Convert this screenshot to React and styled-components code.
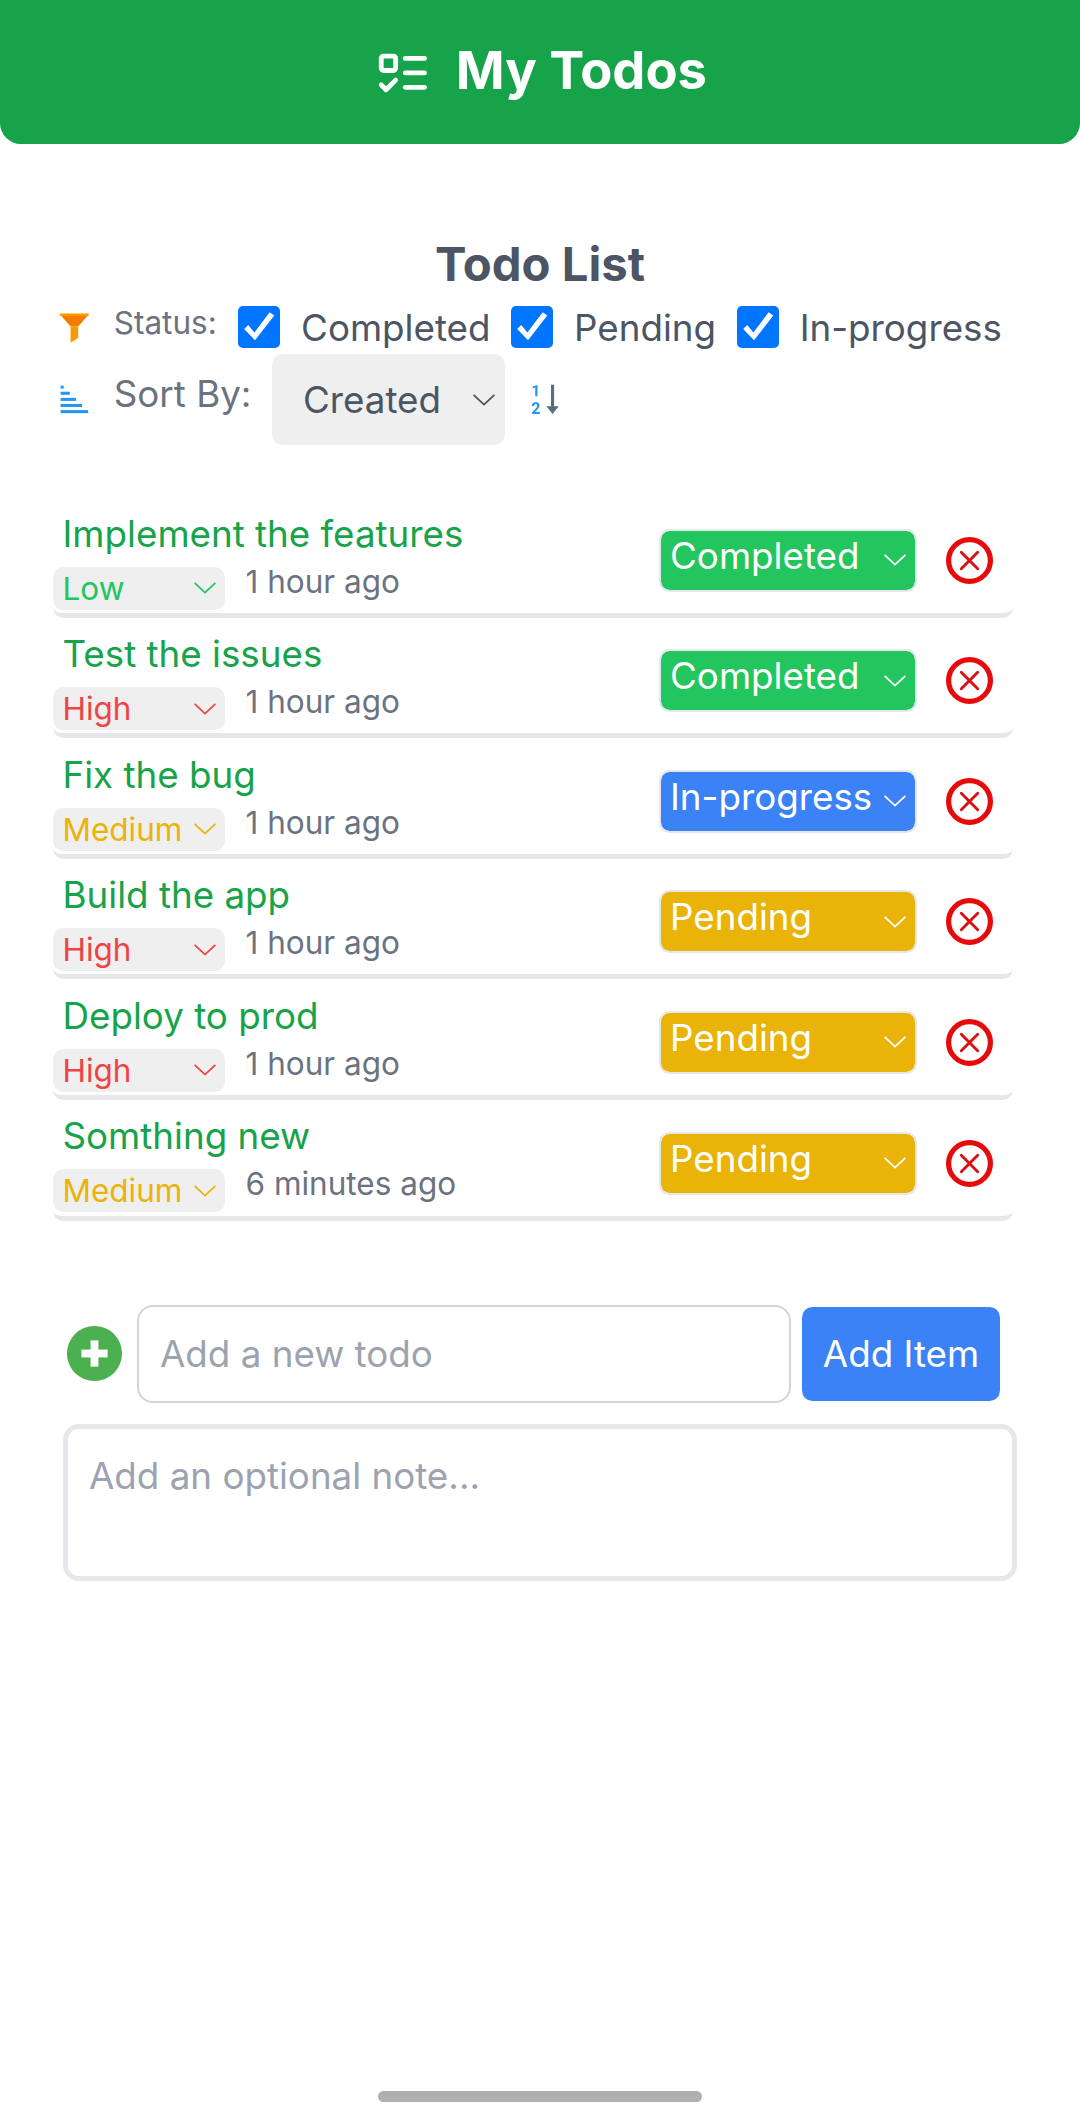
import React from "react";
import styled, { createGlobalStyle } from "styled-components";
import { LuListTodo } from "react-icons/lu";
import {
  FcFilledFilter,
  FcGenericSortingAsc,
  FcNumericalSorting12,
  FcPlus,
} from "react-icons/fc";

const GlobalStyle = createGlobalStyle`
  *, *::before, *::after { box-sizing: border-box; }
  body {
    margin: 0;
    background: #fff;
    color: #4b5563;
    font-family: Inter, "Liberation Sans", sans-serif;
    font-size: 36.75px;
    line-height: 52px;
  }
  ul { list-style: none; margin: 0; padding: 0; }
  h1, h2, p { margin: 0; }
  svg { display: block; flex: none; }
`;

const Page = styled.div`
  display: flex;
  flex-direction: column;
  height: 2116px;
  overflow: hidden;
`;

const Header = styled.header`
  display: flex;
  justify-content: center;
  gap: 24px;
  height: 144px;
  padding: 34px 0 0 1px;
  background: #16a34a;
  color: #fff;
  border-radius: 0 0 21px 21px;

  svg { margin-top: 10px; }
`;

const AppTitle = styled.h1`
  font-size: 52.5px;
  line-height: 72px;
  font-weight: 700;
`;

const Main = styled.main`
  display: flex;
  flex-direction: column;
  padding: 92px 63px 0 53px;
`;

const ListTitle = styled.h2`
  padding-left: 10px;
  text-align: center;
  font-size: 47.25px;
  line-height: 56px;
  font-weight: 700;
`;

const FilterBar = styled.div`
  display: flex;
  align-items: center;
  height: ${(p) => p.$height}px;
  margin-top: ${(p) => p.$top || 0}px;
  padding-left: 3px;
  white-space: nowrap;
`;

const FilterLabel = styled.span`
  flex: none;
  width: ${(p) => p.$width}px;
  margin-left: 21px;
  padding-bottom: ${(p) => p.$lift}px;
  color: #6b7280;
  font-size: ${(p) => (p.$small ? 31.5 : 36.75)}px;
`;

const CheckLabel = styled.label`
  display: flex;
  flex: none;
  align-items: center;
  gap: 21px;
  margin-right: 20.5px;
`;

const CheckText = styled.span`
  padding-top: 2px;
`;

const CheckBox = styled.span`
  width: 42px;
  height: 42px;
  border-radius: 5px;
  background: #0075ff;
`;

const SortSelect = styled.div`
  display: flex;
  align-items: center;
  justify-content: space-between;
  width: 233px;
  height: 91px;
  margin-right: 20px;
  padding: 0 10px 0 30.5px;
  border-radius: 10.5px;
  background: #efefef;
`;

const List = styled.ul`
  margin-top: 52px;
`;

const Item = styled.li`
  display: flex;
  align-items: center;
  width: 959.5px;
  height: 120.6px;
  padding: 10.5px 19.5px 0 0;
  border-bottom: 5px solid #e5e7eb;
  border-radius: 10.5px;
`;

const ItemBody = styled.div`
  flex: 1;
  align-self: flex-start;
`;

const ItemTitle = styled.p`
  padding-left: 9.5px;
  color: #16a34a;
`;

const ItemMeta = styled.div`
  display: flex;
  align-items: center;
  gap: 20.5px;
  height: 43px;
  margin-top: 7px;
  font-size: 31.5px;
  line-height: 43px;
`;

const PRIORITY_COLORS = { Low: "#22c55e", Medium: "#eab308", High: "#ef4444" };
const STATUS_COLORS = {
  Completed: "#22c55e",
  "In-progress": "#3b82f6",
  Pending: "#eab308",
};

const PrioritySelect = styled.div`
  display: flex;
  align-items: center;
  justify-content: space-between;
  width: 172px;
  height: 43px;
  padding: 0 9.5px 0 9.5px;
  border-radius: 10.5px;
  background: #efefef;
  color: ${(p) => PRIORITY_COLORS[p.$level]};
`;

const Age = styled.span`
  padding-bottom: 14px;
  color: #6b7280;
`;

const StatusSelect = styled.div`
  display: flex;
  align-items: center;
  justify-content: space-between;
  width: 258px;
  height: 63px;
  margin-right: 29.5px;
  padding: 0 9px 0 9.5px;
  border: 2px solid #e5e7eb;
  border-radius: 10.5px;
  background: ${(p) => STATUS_COLORS[p.$status]};
  background-clip: padding-box;
  color: #fff;
`;

const StatusText = styled.span`
  padding-bottom: 9px;
`;

const AddRow = styled.div`
  display: flex;
  align-items: center;
  height: 98px;
  margin: 84.4px 0 21px 10px;

  svg { margin-bottom: 1px; }
`;

const TodoInput = styled.input`
  width: 654px;
  height: 98px;
  margin: 0 11px;
  padding: 0 21px 1px;
  border: 2px solid #d1d5db;
  border-radius: 16px;
  background: #fff;
  font: inherit;
  outline: none;
  &::placeholder { color: #9ca3af; opacity: 1; }
`;

const AddButton = styled.button`
  width: 198px;
  height: 94px;
  padding: 0;
  border: 0;
  border-radius: 10.5px;
  background: #3b82f6;
  color: #fff;
  font: inherit;
`;

const NoteInput = styled.textarea`
  display: block;
  width: 954px;
  height: 157px;
  margin-left: 10px;
  padding: 21px;
  border: 5px solid #e5e7eb;
  border-radius: 16px;
  font: inherit;
  resize: none;
  outline: none;
  &::placeholder { color: #9ca3af; opacity: 1; }
`;

const HomeIndicator = styled.div`
  width: 324px;
  height: 11px;
  margin: auto auto 14px;
  border-radius: 6px;
  background: #afafaf;
`;

const Chevron = () => (
  <svg width="22" height="12" viewBox="0 0 22 12" fill="none" stroke="currentColor" strokeWidth="1.8">
    <path d="M0.6 0.8 11 10.6 21.4 0.8" />
  </svg>
);

const Check = ({ children }) => (
  <CheckLabel>
    <CheckBox>
      <svg width="42" height="42" viewBox="0 0 42 42" fill="#fff">
        <path d="M6.2 23 10.2 19 16.4 26.6 31.6 6.3 36.3 9.6 17 34.2Z" />
      </svg>
    </CheckBox>
    <CheckText>{children}</CheckText>
  </CheckLabel>
);

const Remove = () => (
  <svg width="47" height="47" viewBox="0 0 47 47" fill="none">
    <circle cx="23.5" cy="23.5" r="20.9" stroke="#e60a0a" strokeWidth="5.2" />
    <path d="M15.3 15.3 31.7 31.7M31.7 15.3 15.3 31.7" stroke="#d81212" strokeWidth="2.9" strokeLinecap="round" />
  </svg>
);

const TODOS = [
  { title: "Implement the features", priority: "Low", age: "1 hour ago", status: "Completed" },
  { title: "Test the issues", priority: "High", age: "1 hour ago", status: "Completed" },
  { title: "Fix the bug", priority: "Medium", age: "1 hour ago", status: "In-progress" },
  { title: "Build the app", priority: "High", age: "1 hour ago", status: "Pending" },
  { title: "Deploy to prod", priority: "High", age: "1 hour ago", status: "Pending" },
  { title: "Somthing new", priority: "Medium", age: "6 minutes ago", status: "Pending" },
];

export default function App() {
  return (
    <Page>
      <GlobalStyle />
      <Header>
        <LuListTodo size={57.75} />
        <AppTitle>My Todos</AppTitle>
      </Header>
      <Main>
        <ListTitle>Todo List</ListTitle>
        <FilterBar $height={54} $top={8}>
          <FcFilledFilter size={36.75} />
          <FilterLabel $small $width={124.3} $lift={9}>Status:</FilterLabel>
          <Check>Completed</Check>
          <Check>Pending</Check>
          <Check>In-progress</Check>
        </FilterBar>
        <FilterBar $height={91}>
          <FcGenericSortingAsc size={36.75} />
          <FilterLabel $width={158.7} $lift={12}>Sort By:</FilterLabel>
          <SortSelect>
            Created
            <Chevron />
          </SortSelect>
          <FcNumericalSorting12 size={36.75} />
        </FilterBar>
        <List>
          {TODOS.map((todo) => (
            <Item key={todo.title}>
              <ItemBody>
                <ItemTitle>{todo.title}</ItemTitle>
                <ItemMeta>
                  <PrioritySelect $level={todo.priority}>
                    {todo.priority}
                    <Chevron />
                  </PrioritySelect>
                  <Age>{todo.age}</Age>
                </ItemMeta>
              </ItemBody>
              <StatusSelect $status={todo.status}>
                <StatusText>{todo.status}</StatusText>
                <Chevron />
              </StatusSelect>
              <Remove />
            </Item>
          ))}
        </List>
        <AddRow>
          <FcPlus size={63} />
          <TodoInput placeholder="Add a new todo" />
          <AddButton>Add Item</AddButton>
        </AddRow>
        <NoteInput placeholder="Add an optional note..." />
      </Main>
      <HomeIndicator />
    </Page>
  );
}
